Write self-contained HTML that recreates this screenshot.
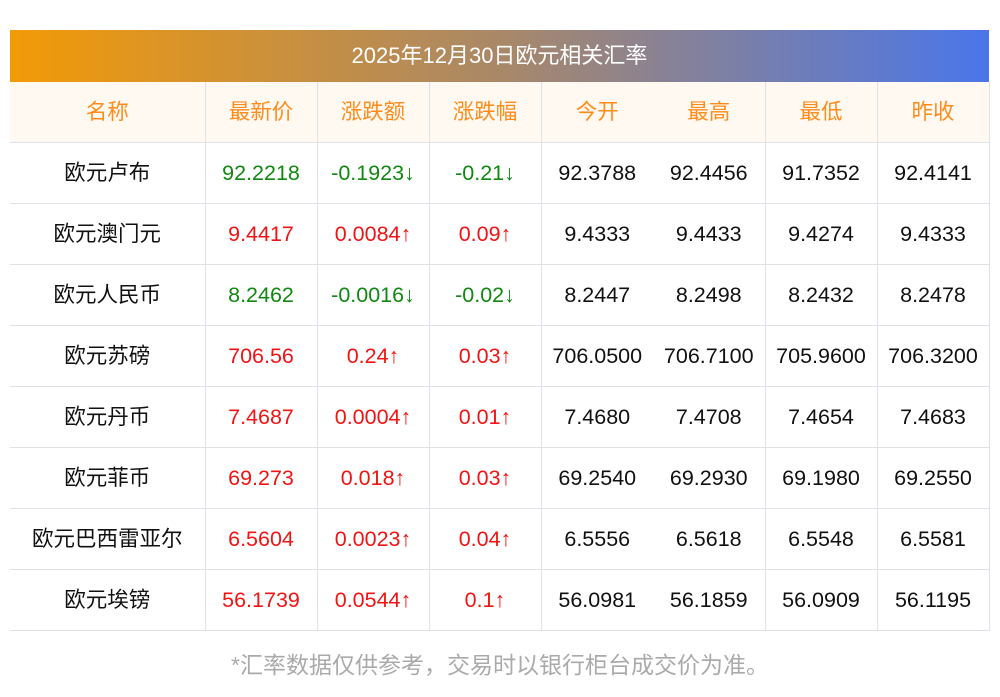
<!DOCTYPE html>
<html><head><meta charset="utf-8"><style>
body{margin:0;background:#fff;font-family:"Liberation Sans","Noto Sans CJK SC",sans-serif;}
.wrap{position:absolute;left:10px;top:30px;width:979px;}
.title{height:52px;background:linear-gradient(90deg,#f39a06,#a98868 50%,#4a76ea);color:#fff;font-size:22px;text-align:center;line-height:52px;}
table{border-collapse:collapse;width:979px;table-layout:fixed;}
td{height:60px;border-bottom:1px solid #e1e1ea;text-align:center;font-size:21.5px;line-height:22px;color:#111;padding:0;vertical-align:middle;}
td span{display:inline-block;line-height:22px;vertical-align:middle;}
tr.h td{background:#fff9f2;color:#ff8c1a;border-bottom:1px solid #e1e1ea;}
td.b{border-right:1px solid #e1e1ea;}
td.g{color:#118811}td.r{color:#f01414}
.foot{position:absolute;top:650px;left:0;width:1000px;text-align:center;color:#aaa;font-size:23px;line-height:30px;}
</style></head><body>
<div class="wrap">
<div class="title">2025年12月30日欧元相关汇率</div>
<table>
<colgroup><col style="width:195px"><col style="width:112px"><col style="width:112px"><col style="width:112px"><col style="width:112px"><col style="width:112px"><col style="width:112px"><col style="width:112px"></colgroup>
<tr class="h"><td class="b">名称</td><td class="b">最新价</td><td class="b">涨跌额</td><td class="b">涨跌幅</td><td>今开</td><td class="b">最高</td><td class="b">最低</td><td class="b">昨收</td></tr>
<tr><td class="b">欧元卢布</td><td class="b g">92.2218</td><td class="b g">-0.1923↓</td><td class="b g">-0.21↓</td><td>92.3788</td><td class="b">92.4456</td><td class="b">91.7352</td><td class="b">92.4141</td></tr>
<tr><td class="b">欧元澳门元</td><td class="b r">9.4417</td><td class="b r">0.0084↑</td><td class="b r">0.09↑</td><td>9.4333</td><td class="b">9.4433</td><td class="b">9.4274</td><td class="b">9.4333</td></tr>
<tr><td class="b">欧元人民币</td><td class="b g">8.2462</td><td class="b g">-0.0016↓</td><td class="b g">-0.02↓</td><td>8.2447</td><td class="b">8.2498</td><td class="b">8.2432</td><td class="b">8.2478</td></tr>
<tr><td class="b">欧元苏磅</td><td class="b r">706.56</td><td class="b r">0.24↑</td><td class="b r">0.03↑</td><td>706.0500</td><td class="b">706.7100</td><td class="b">705.9600</td><td class="b">706.3200</td></tr>
<tr><td class="b">欧元丹币</td><td class="b r">7.4687</td><td class="b r">0.0004↑</td><td class="b r">0.01↑</td><td>7.4680</td><td class="b">7.4708</td><td class="b">7.4654</td><td class="b">7.4683</td></tr>
<tr><td class="b">欧元菲币</td><td class="b r">69.273</td><td class="b r">0.018↑</td><td class="b r">0.03↑</td><td>69.2540</td><td class="b">69.2930</td><td class="b">69.1980</td><td class="b">69.2550</td></tr>
<tr><td class="b">欧元巴西雷亚尔</td><td class="b r">6.5604</td><td class="b r">0.0023↑</td><td class="b r">0.04↑</td><td>6.5556</td><td class="b">6.5618</td><td class="b">6.5548</td><td class="b">6.5581</td></tr>
<tr><td class="b">欧元埃镑</td><td class="b r">56.1739</td><td class="b r">0.0544↑</td><td class="b r">0.1↑</td><td>56.0981</td><td class="b">56.1859</td><td class="b">56.0909</td><td class="b">56.1195</td></tr>
</table>
</div>
<div class="foot">*汇率数据仅供参考，交易时以银行柜台成交价为准。</div>
</body></html>
